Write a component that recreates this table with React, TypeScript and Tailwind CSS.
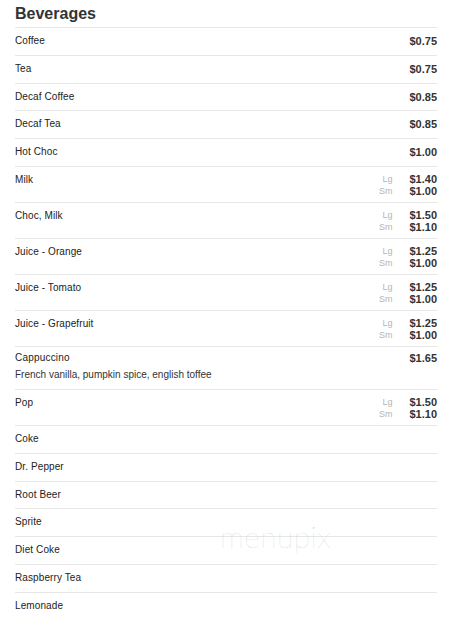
const items: { name: string; price?: string; lg?: string; sm?: string; desc?: string }[] = [
  { name: "Coffee", price: "$0.75" },
  { name: "Tea", price: "$0.75" },
  { name: "Decaf Coffee", price: "$0.85" },
  { name: "Decaf Tea", price: "$0.85" },
  { name: "Hot Choc", price: "$1.00" },
  { name: "Milk", lg: "$1.40", sm: "$1.00" },
  { name: "Choc, Milk", lg: "$1.50", sm: "$1.10" },
  { name: "Juice - Orange", lg: "$1.25", sm: "$1.00" },
  { name: "Juice - Tomato", lg: "$1.25", sm: "$1.00" },
  { name: "Juice - Grapefruit", lg: "$1.25", sm: "$1.00" },
  { name: "Cappuccino", price: "$1.65", desc: "French vanilla, pumpkin spice, english toffee" },
  { name: "Pop", lg: "$1.50", sm: "$1.10" },
  { name: "Coke" },
  { name: "Dr. Pepper" },
  { name: "Root Beer" },
  { name: "Sprite" },
  { name: "Diet Coke" },
  { name: "Raspberry Tea" },
  { name: "Lemonade" },
];

function Row({ item }: { item: (typeof items)[number] }) {
  if (item.lg) {
    return (
      <div className="flex justify-between border-b border-[#e6e6e6] pt-[6px] pb-[5px]">
        <span className="text-[10px] leading-[14px] text-[#222] tracking-[0.1px]">{item.name}</span>
        <div className="grid grid-cols-[auto_auto] gap-x-[17px] leading-[12px]">
          <span className="text-[9px] text-right text-[#b5b5b5]">Lg</span>
          <span className="text-[11px] font-bold text-[#333]">{item.lg}</span>
          <span className="text-[9px] text-right text-[#b5b5b5]">Sm</span>
          <span className="text-[11px] font-bold text-[#333]">{item.sm}</span>
        </div>
      </div>
    );
  }
  if (item.desc) {
    return (
      <div className="border-b border-[#e6e6e6] pt-[4px] pb-[7px]">
        <div className="flex justify-between">
          <span className="text-[10px] leading-[14px] text-[#222] tracking-[0.2px]">{item.name}</span>
          <span className="text-[11px] leading-[14px] font-bold text-[#333]">{item.price}</span>
        </div>
        <p className="mt-[3px] text-[10px] leading-[14px] text-[#333]">{item.desc}</p>
      </div>
    );
  }
  return (
    <div className="flex justify-between border-b border-[#e6e6e6] pt-[6px] pb-[6.8px]">
      <span className="text-[10px] leading-[14px] text-[#222] tracking-[0.1px]">{item.name}</span>
      {item.price && <span className="text-[11px] leading-[14px] font-bold text-[#333]">{item.price}</span>}
    </div>
  );
}

export default function App() {
  return (
    <div
      className="relative min-h-[618px] bg-white pl-[15px] pr-[16px]"
      style={{ fontFamily: '"Liberation Sans", Arial, sans-serif' }}
    >
      <h2 className="pt-[4px] pb-[4px] text-[16px] leading-[19px] font-bold text-[#333] border-b border-[#e6e6e6]">
        Beverages
      </h2>
      {items.map((it) => (
        <Row key={it.name} item={it} />
      ))}
      {/* watermark */}
      <div
        className="absolute left-[220px] top-[521px] text-[30px] leading-[30px] font-thin tracking-[0.5px] text-[#d6d6d6] select-none"
        style={{ fontFamily: "Lato, sans-serif" }}
      >
        menupix
      </div>
    </div>
  );
}
